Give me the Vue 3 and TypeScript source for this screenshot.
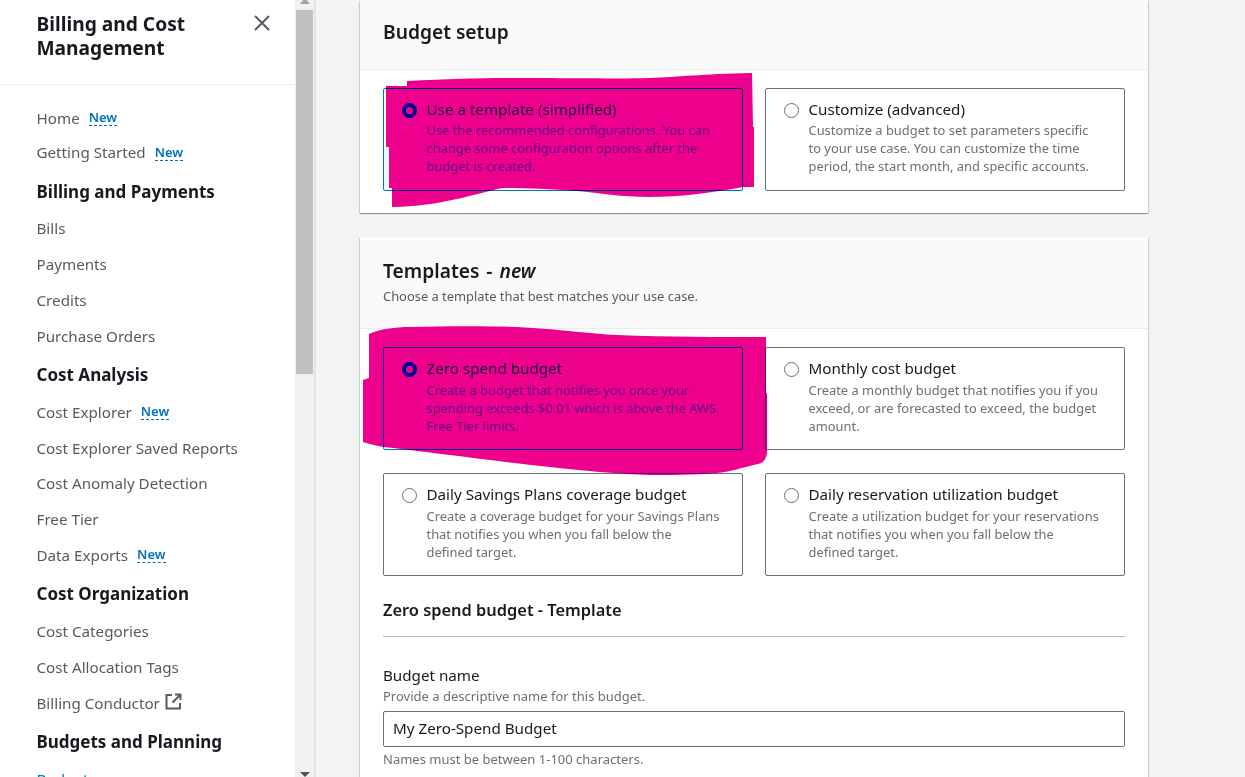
<template>
  <div class="page">
    <aside class="sidebar">
      <div class="side-head">
        <h2>Billing and Cost Management</h2>
        <svg class="close" width="18" height="18" viewBox="0 0 18 18">
          <path d="M2 2 L16 16 M16 2 L2 16" stroke="#545b64" stroke-width="2" fill="none" />
        </svg>
      </div>
      <nav class="side-nav">
        <template v-for="item in navItems" :key="item.label">
          <h3 v-if="item.heading" class="nav-heading">{{ item.label }}</h3>
          <div v-else class="nav-item" :class="{ active: item.active }">
            <span>{{ item.label }}</span>
            <span v-if="item.isNew" class="new-tag">New</span>
            <svg v-if="item.external" class="ext" width="17" height="17" viewBox="0 0 17 17">
              <path d="M7 2 H1.5 V15.5 H15 V10" stroke="#545b64" stroke-width="2" fill="none" />
              <path d="M10 1.5 H15.5 V7 M15.5 1.5 L7.5 9.5" stroke="#545b64" stroke-width="2" fill="none" />
            </svg>
          </div>
        </template>
      </nav>
    </aside>

    <div class="scrollbar">
      <span class="arrow up"></span>
      <div class="thumb"></div>
      <span class="arrow down"></span>
    </div>

    <main class="content">
      <section class="card first">
        <header class="card-head setup-head">
          <h2>Budget setup</h2>
        </header>
        <div class="card-body setup-body">
          <div class="options">
            <div v-for="opt in setupOptions" :key="opt.title" class="option" :class="{ selected: opt.selected }">
              <span class="radio"></span>
              <div>
                <div class="opt-title">{{ opt.title }}</div>
                <div class="opt-desc">{{ opt.desc }}</div>
              </div>
            </div>
          </div>
        </div>
      </section>

      <section class="card">
        <header class="card-head templates-head">
          <h2>Templates - <em>new</em></h2>
          <p>Choose a template that best matches your use case.</p>
        </header>
        <div class="card-body templates-body">
          <div class="options">
            <div v-for="opt in templateOptions" :key="opt.title" class="option" :class="{ selected: opt.selected }">
              <span class="radio"></span>
              <div>
                <div class="opt-title">{{ opt.title }}</div>
                <div class="opt-desc">{{ opt.desc }}</div>
              </div>
            </div>
          </div>

          <h3 class="sub-title">Zero spend budget - Template</h3>
          <div class="field">
            <label>Budget name</label>
            <div class="hint">Provide a descriptive name for this budget.</div>
            <input type="text" value="My Zero-Spend Budget" />
            <div class="hint below">Names must be between 1-100 characters.</div>
          </div>
        </div>
      </section>
    </main>

    <!-- marker scribbles drawn over the screenshot -->
    <svg class="scribble" width="1245" height="777" viewBox="0 0 1245 777">
      <path
        fill="#ec008c"
        d="M386 86 L407 86 L407 81 C450 79 480 78 517 78 C580 78 620 79 650 78 C680 77 700 74 752 73 L753 127 L754 127 L754 187 L743 187 C710 193 680 197 650 197 C620 197 600 193 577 191 C550 189 520 188 503 188 C480 192 440 207 392 207 L392 188 L389 188 L389 147 L386 147 Z"
      />
      <path
        fill="#ec008c"
        d="M369 334 C380 329 395 327 410 327 C450 326 490 326 517 327 C560 329 590 334 617 335 C670 337 720 337 766 337 L766 393 L767 393 L767 453 C766 460 763 463 758 464 C740 468 730 472 717 473 C690 475 670 475 650 475 C620 474 585 471 550 467 C515 463 480 459 450 455 C425 452 405 449 383 447 C375 445 368 444 363 442 L363 380 L369 378 Z"
      />
    </svg>
  </div>
</template>

<script setup lang="ts">
interface NavItem {
  label: string
  heading?: boolean
  isNew?: boolean
  external?: boolean
  active?: boolean
}

interface BudgetOption {
  title: string
  desc: string
  selected?: boolean
}

const navItems: NavItem[] = [
  { label: 'Home', isNew: true },
  { label: 'Getting Started', isNew: true },
  { label: 'Billing and Payments', heading: true },
  { label: 'Bills' },
  { label: 'Payments' },
  { label: 'Credits' },
  { label: 'Purchase Orders' },
  { label: 'Cost Analysis', heading: true },
  { label: 'Cost Explorer', isNew: true },
  { label: 'Cost Explorer Saved Reports' },
  { label: 'Cost Anomaly Detection' },
  { label: 'Free Tier' },
  { label: 'Data Exports', isNew: true },
  { label: 'Cost Organization', heading: true },
  { label: 'Cost Categories' },
  { label: 'Cost Allocation Tags' },
  { label: 'Billing Conductor', external: true },
  { label: 'Budgets and Planning', heading: true },
  { label: 'Budgets', active: true },
]

const setupOptions: BudgetOption[] = [
  {
    title: 'Use a template (simplified)',
    desc: 'Use the recommended configurations. You can change some configuration options after the budget is created.',
    selected: true,
  },
  {
    title: 'Customize (advanced)',
    desc: 'Customize a budget to set parameters specific to your use case. You can customize the time period, the start month, and specific accounts.',
  },
]

const templateOptions: BudgetOption[] = [
  {
    title: 'Zero spend budget',
    desc: 'Create a budget that notifies you once your spending exceeds $0.01 which is above the AWS Free Tier limits.',
    selected: true,
  },
  {
    title: 'Monthly cost budget',
    desc: 'Create a monthly budget that notifies you if you exceed, or are forecasted to exceed, the budget amount.',
  },
  {
    title: 'Daily Savings Plans coverage budget',
    desc: 'Create a coverage budget for your Savings Plans that notifies you when you fall below the defined target.',
  },
  {
    title: 'Daily reservation utilization budget',
    desc: 'Create a utilization budget for your reservations that notifies you when you fall below the defined target.',
  },
]
</script>

<style>
html,
body {
  margin: 0;
  overflow: hidden;
}
</style>

<style scoped>
.page {
  position: relative;
  display: flex;
  width: 1245px;
  height: 777px;
  overflow: hidden;
  background: #f2f3f3;
  font-family: "Noto Sans", "Open Sans", sans-serif;
  color: #16191f;
}

.sidebar {
  flex: 0 0 295px;
  height: 777px;
  overflow: hidden;
  background: #fff;
}

.side-head {
  display: flex;
  justify-content: space-between;
  height: 85px;
  box-sizing: border-box;
  padding: 12px 25px 0 36.5px;
  border-bottom: 1px solid #eaeded;
}

.side-head h2 {
  margin: 0;
  width: 190px;
  font-size: 19.2px;
  line-height: 24px;
  font-weight: 700;
}

.close {
  margin: 2px -1px 0 0;
}

.side-nav {
  padding: 15px 0 0 36.5px;
}

.nav-item {
  display: flex;
  align-items: center;
  box-sizing: border-box;
  height: 35.75px;
  padding-bottom: 3px;
  font-size: 15.2px;
  color: #545b64;
}

.nav-item:first-child {
  padding-bottom: 0;
}

.nav-item.active {
  color: #0073bb;
}

.nav-heading {
  margin: 0;
  height: 40.5px;
  line-height: 39.5px;
  font-size: 17px;
  font-weight: 700;
  color: #16191f;
}

.new-tag {
  margin-left: 9px;
  font-size: 13px;
  font-weight: 600;
  line-height: 16px;
  color: #0073bb;
  border-bottom: 1px dashed #0073bb;
}

.ext {
  margin-left: 5px;
  margin-top: -3px;
}

.scrollbar {
  flex: 0 0 19px;
  display: flex;
  flex-direction: column;
  align-items: center;
  height: 777px;
  background: #f1f1f1;
  position: relative;
}

.thumb {
  width: 17px;
  height: 364px;
  margin-top: 10px;
  background: #c1c1c1;
}

.arrow {
  position: absolute;
  width: 0;
  height: 0;
  border-left: 5px solid transparent;
  border-right: 5px solid transparent;
}

.arrow.up {
  top: -2px;
  border-bottom: 6px solid #a3a3a3;
}

.arrow.down {
  bottom: 0;
  border-top: 5px solid #505050;
}

.content {
  flex: 1;
  height: 777px;
  padding-left: 44px;
  border-left: 2px solid #e2e4e4;
  box-sizing: border-box;
  overflow: hidden;
}

.card {
  width: 788px;
  margin-bottom: 24px;
  background: #fff;
  border-radius: 1px;
  box-shadow: 0 1px 1px 0 rgba(0, 28, 36, 0.3), 1px 1px 1px 0 rgba(0, 28, 36, 0.15), -1px 1px 1px 0 rgba(0, 28, 36, 0.15);
}

.card-head {
  box-sizing: border-box;
  background: #fafafa;
  border-bottom: 1px solid #eaeded;
  padding-left: 23px;
}

.card-head h2 {
  margin: 0;
  font-size: 19.2px;
  line-height: 26px;
  font-weight: 600;
}

.card-head em {
  font-style: italic;
}

.card-head p {
  margin: 0;
  font-size: 12.9px;
  line-height: 18px;
  color: #545b64;
}

.setup-head {
  height: 70px;
  padding-top: 19px;
}

.templates-head {
  height: 92px;
  padding-top: 21px;
}

.templates-head h2 {
  word-spacing: 2px;
}

.templates-head p {
  margin-top: 3px;
}

.card-body {
  padding: 18px 23px 22px;
}

.options {
  display: grid;
  grid-template-columns: 360px 360px;
  column-gap: 22px;
  row-gap: 23px;
}

.option {
  display: flex;
  gap: 9.5px;
  box-sizing: border-box;
  height: 103px;
  padding: 9px 22.5px 0 18px;
  background: #fff;
  border: 1px solid #687078;
  border-radius: 2px;
}

.option.selected {
  background: #f1faff;
  border-color: #0073bb;
}

.radio {
  flex: 0 0 15px;
  box-sizing: border-box;
  width: 15px;
  height: 15px;
  margin-top: 5px;
  border: 1.5px solid #687078;
  border-radius: 50%;
  background: #fff;
}

.option.selected .radio {
  border: 4.5px solid #0073bb;
}

.opt-title {
  margin-bottom: 1px;
  font-size: 15.2px;
  line-height: 22px;
  color: #16191f;
}

.templates-body .opt-title {
  margin-bottom: 2px;
}

.opt-desc {
  font-size: 12.9px;
  line-height: 18px;
  color: #687078;
}

.sub-title {
  margin: 23px 0 0;
  padding-bottom: 15px;
  font-size: 16.4px;
  line-height: 22px;
  font-weight: 600;
  border-bottom: 1px solid #aab7b8;
}

.field {
  margin-top: 27px;
}

.field label {
  display: block;
  font-size: 15.2px;
  line-height: 22px;
}

.hint {
  margin-top: 1px;
  font-size: 13px;
  line-height: 18px;
  color: #687078;
}

.hint.below {
  margin-top: 3px;
}

.field input {
  display: block;
  box-sizing: border-box;
  width: 742px;
  height: 36px;
  margin-top: 6px;
  padding: 0 9px 2px;
  border: 1px solid #687078;
  border-radius: 2px;
  background: #fff;
  font: inherit;
  font-size: 15.2px;
  color: #16191f;
}

.scribble {
  position: absolute;
  left: 0;
  top: 0;
  mix-blend-mode: darken;
  pointer-events: none;
}
</style>
